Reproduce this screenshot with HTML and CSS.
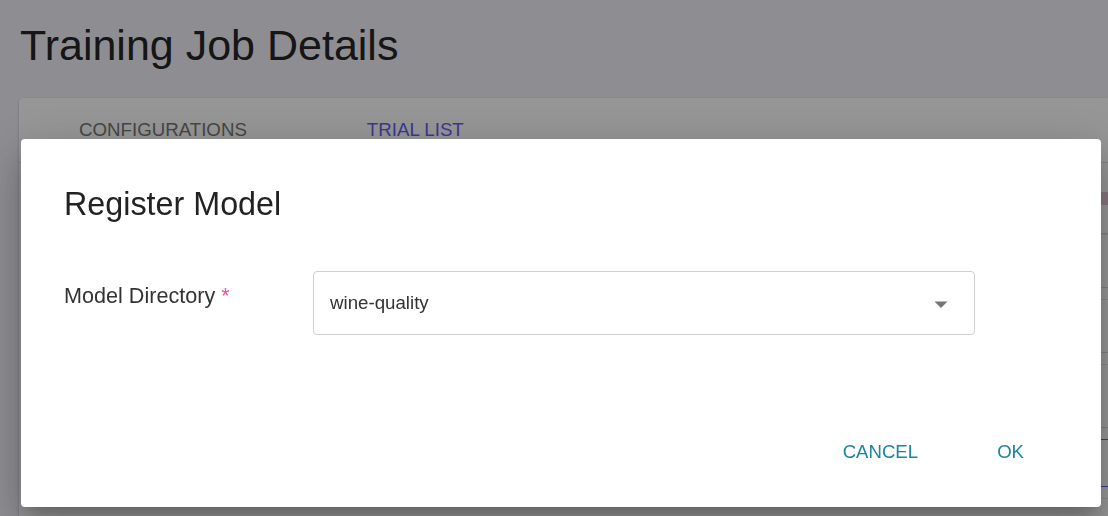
FILE: index.html
```html
<!DOCTYPE html>
<html>
<head>
<meta charset="utf-8">
<link rel="stylesheet" href="styles.css">
</head>
<body>
<main class="page">
  <h1 class="page-title">Training Job Details</h1>
  <section class="card">
    <nav class="tabs">
      <div class="tab">CONFIGURATIONS</div>
      <div class="tab tab-active">TRIAL LIST</div>
    </nav>
    <div class="table">
      <div class="toolbar"><span class="chip"></span></div>
      <div class="row"></div>
      <div class="row"></div>
      <div class="row row-tall"></div>
      <div class="row row-sel"></div>
      <div class="row"></div>
    </div>
  </section>
</main>

<div class="backdrop"></div>

<div class="dialog" role="dialog">
  <h2 class="dialog-title">Register Model</h2>
  <div class="field">
    <label class="field-label">Model Directory <span class="req">*</span></label>
    <div class="select">
      <span class="select-value">wine-quality</span>
      <svg class="select-arrow" width="14" height="7" viewBox="0 0 14 7"><path d="M0.5 0.5h13L7 7z" fill="#757575"/></svg>
    </div>
  </div>
  <div class="actions">
    <button class="btn">CANCEL</button>
    <button class="btn">OK</button>
  </div>
</div>
</body>
</html>
```

FILE: styles.css
```css
html, body {
  margin: 0;
  padding: 0;
  height: 100%;
  overflow: hidden;
}
body {
  background: #f2f1f9;
  font-family: "Liberation Sans", Arial, sans-serif;
  color: rgba(0,0,0,0.87);
}
.page {
  padding: 20px 0 0 19px;
}
.page-title {
  margin: 0 0 28px 1px;
  font-size: 43px;
  line-height: 50px;
  font-weight: 400;
  color: #262626;
}
.card {
  background: #fff;
  border-radius: 4px 0 0 0;
  box-shadow: 0 1px 3px rgba(0,0,0,0.2), 0 1px 1px rgba(0,0,0,0.14);
  height: 418px;
  overflow: hidden;
}
.tabs {
  display: flex;
  height: 64px;
  border-bottom: 1px solid #e0e0e0;
}
.tab {
  padding: 0 60px;
  display: flex;
  align-items: center;
  font-size: 18.7px;
  color: #777;
}
.tab-active {
  color: #665ef8;
}
.table {
  margin-left: 70px;
}
.toolbar {
  height: 70px;
  display: flex;
  justify-content: flex-end;
  align-items: center;
  border-bottom: 1px solid #dcdcdc;
}
.chip {
  width: 20px;
  height: 13px;
  background: #e6c9d8;
}
.row {
  height: 52px;
  border-bottom: 1px solid #dcdcdc;
  border-top: 1px solid #e8e8e8;
  margin-bottom: 11px;
}
.row-tall {
  height: 62px;
}
.row-sel {
  border-top-color: #6a62f5;
  border-bottom-color: #6a62f5;
  height: 46px;
}
.backdrop {
  position: fixed;
  inset: 0;
  background: rgba(0,0,0,0.41);
}
.dialog {
  position: fixed;
  left: 21px;
  top: 139px;
  width: 1080px;
  height: 368px;
  box-sizing: border-box;
  background: #fff;
  border-radius: 4px;
  box-shadow: 0 11px 15px -7px rgba(0,0,0,0.2), 0 24px 38px 3px rgba(0,0,0,0.14), 0 9px 46px 8px rgba(0,0,0,0.12);
  padding: 45px 69px 37px 43px;
  display: flex;
  flex-direction: column;
}
.dialog-title {
  margin: 0 0 47px 0;
  font-size: 32.3px;
  line-height: 40px;
  font-weight: 400;
  color: #222;
}
.field {
  display: grid;
  grid-template-columns: 249px 662px;
  align-items: start;
}
.field-label {
  font-size: 21.6px;
  line-height: 26px;
  padding-top: 11.5px;
  color: #333;
}
.req {
  color: #f0509a;
}
.select {
  height: 64px;
  box-sizing: border-box;
  border: 1px solid #cfcfcf;
  border-radius: 4px;
  display: flex;
  align-items: center;
  justify-content: space-between;
  padding: 0 26px 0 16px;
}
.select-value {
  font-size: 18.7px;
  line-height: 22px;
  color: #333;
}
.select-arrow {
  display: block;
  margin-top: 2px;
}
.actions {
  margin-top: auto;
  display: flex;
  justify-content: flex-end;
  gap: 63px;
}
.btn {
  font-family: "Liberation Sans", Arial, sans-serif;
  font-size: 18.6px;
  line-height: 24px;
  padding: 6px 8px;
  border: 0;
  background: transparent;
  color: #1c84a2;
  cursor: pointer;
}
```
